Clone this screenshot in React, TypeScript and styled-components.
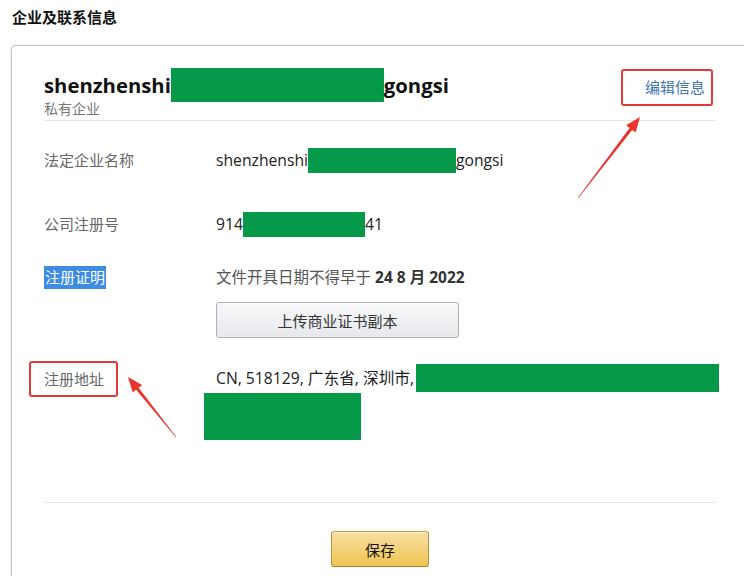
import React from "react";
import styled, { createGlobalStyle } from "styled-components";

const GlobalStyle = createGlobalStyle`
  html, body {
    margin: 0;
    padding: 0;
    background: #ffffff;
    overflow: hidden;
  }
  body {
    font-family: "Open Sans", "Noto Sans CJK SC", sans-serif;
    color: #333;
  }
`;

const Page = styled.div`
  position: relative;
  width: 744px;
  height: 576px;
  padding: 7px 0 0 11px;
  box-sizing: border-box;
  overflow: hidden;
`;

const PageTitle = styled.h1`
  margin: 0 0 0 1px;
  font-size: 15px;
  line-height: 20px;
  font-weight: 700;
  color: #111;
`;

const Card = styled.section`
  margin-top: 18px;
  width: 738px;
  box-sizing: border-box;
  border: 1px solid #c4c4c4;
  border-radius: 4px;
  box-shadow: 0 1px 3px rgba(0, 0, 0, 0.14);
  padding: 22px 32px 40px;
  background: #fff;
`;

const Header = styled.div`
  display: flex;
  justify-content: space-between;
  align-items: flex-start;
  padding-bottom: 4px;
  border-bottom: 1px solid #e6e6e6;
`;

const NameBlock = styled.div`
  display: flex;
  flex-direction: column;
`;

const CompanyName = styled.div`
  display: flex;
  align-items: center;
  height: 34px;
  font-size: 20.3px;
  font-weight: 700;
  color: #111;
`;

const Subtitle = styled.div`
  font-size: 14px;
  line-height: 14px;
  color: #777;
`;

const Redact = styled.span<{ $w: number; $h: number; $ml?: number }>`
  display: inline-block;
  flex: none;
  width: ${(p) => p.$w}px;
  height: ${(p) => p.$h}px;
  margin-left: ${(p) => p.$ml ?? 0}px;
  background: #07994a;
`;

const RedactBlock = styled.div`
  width: 157px;
  height: 47px;
  margin: 1px 0 0 -12px;
  background: #07994a;
`;

const EditLink = styled.a`
  margin: 1px 3px 0 0;
  padding: 0 6px 0 22px;
  border: 2px solid #e23a36;
  border-radius: 3px;
  font-size: 15px;
  line-height: 33px;
  color: #3f74b1;
  text-decoration: none;
  cursor: pointer;
`;

const Row = styled.div<{ $mt: number }>`
  display: grid;
  grid-template-columns: 172px 1fr;
  align-items: start;
  margin-top: ${(p) => p.$mt}px;
  font-size: 15px;
  line-height: 24px;
`;

const Label = styled.div`
  color: #666;
  justify-self: start;
`;

const SelectedLabel = styled.span`
  display: inline-block;
  padding: 0 1px;
  line-height: 23px;
  background: #3d8ce3;
  color: #fff;
`;

const BoxedLabel = styled.div`
  justify-self: start;
  margin-left: -15px;
  padding: 0 12px 0 13px;
  border: 2px solid #e23a36;
  border-radius: 3px;
  line-height: 32px;
  color: #666;
`;

const ValueLine = styled.div<{ $h: number; $mt?: number }>`
  display: flex;
  align-items: center;
  height: ${(p) => p.$h}px;
  margin-top: ${(p) => p.$mt ?? 0}px;
  font-size: 15.7px;
  color: #222;
  white-space: pre;
`;

const Note = styled.div`
  font-size: 15.5px;
  color: #555;
`;

const Strong = styled.b`
  color: #333;
  font-weight: 700;
`;

const UploadButton = styled.button`
  display: block;
  margin-top: 13px;
  width: 243px;
  height: 36px;
  border: 1px solid #adb1b8;
  border-radius: 3px;
  background: linear-gradient(#f7f8fa, #e7e9ec);
  box-shadow: 0 1px 0 rgba(255, 255, 255, 0.6) inset;
  font-family: inherit;
  font-size: 15px;
  color: #333;
  cursor: pointer;
`;

const Divider = styled.hr`
  margin: 62px 0 0;
  border: 0;
  border-top: 1px solid #e6e6e6;
`;

const Actions = styled.div`
  display: flex;
  justify-content: center;
  margin-top: 28px;
`;

const SaveButton = styled.button`
  width: 98px;
  height: 36px;
  border: 1px solid;
  border-color: #c9a23f #b8913a #a8842f;
  border-radius: 3px;
  background: linear-gradient(#f8e0a2, #f0c453);
  box-shadow: 0 1px 0 rgba(255, 255, 255, 0.5) inset;
  font-family: inherit;
  font-size: 15px;
  color: #111;
  cursor: pointer;
`;

const Overlay = styled.svg`
  position: absolute;
  top: 0;
  left: 0;
  pointer-events: none;
`;

function arrowPoints(x1: number, y1: number, x2: number, y2: number): string {
  const dx = x2 - x1;
  const dy = y2 - y1;
  const len = Math.hypot(dx, dy);
  const ux = dx / len;
  const uy = dy / len;
  const nx = -uy;
  const ny = ux;
  const headLen = 15;
  const headW = 6;
  const bx = x2 - ux * headLen;
  const by = y2 - uy * headLen;
  const pts: [number, number][] = [
    [x1 + nx * 0.3, y1 + ny * 0.3],
    [bx + nx * 1.6, by + ny * 1.6],
    [bx + nx * headW, by + ny * headW],
    [x2, y2],
    [bx - nx * headW, by - ny * headW],
    [bx - nx * 1.6, by - ny * 1.6],
    [x1 - nx * 0.3, y1 - ny * 0.3],
  ];
  return pts.map(([x, y]) => `${x.toFixed(1)},${y.toFixed(1)}`).join(" ");
}

export default function App() {
  return (
    <>
      <GlobalStyle />
      <Page>
        <PageTitle>企业及联系信息</PageTitle>
        <Card>
          <Header>
            <NameBlock>
              <CompanyName>
                shenzhenshi
                <Redact $w={213} $h={34} />
                gongsi
              </CompanyName>
              <Subtitle>私有企业</Subtitle>
            </NameBlock>
            <EditLink>编辑信息</EditLink>
          </Header>

          <Row $mt={27}>
            <Label>法定企业名称</Label>
            <ValueLine $h={24}>
              shenzhenshi
              <Redact $w={148} $h={25} />
              gongsi
            </ValueLine>
          </Row>

          <Row $mt={40}>
            <Label>公司注册号</Label>
            <ValueLine $h={24}>
              914
              <Redact $w={122} $h={25} />
              41
            </ValueLine>
          </Row>

          <Row $mt={29}>
            <Label>
              <SelectedLabel>注册证明</SelectedLabel>
            </Label>
            <div>
              <Note>
                文件开具日期不得早于 <Strong>24 8 月 2022</Strong>
              </Note>
              <UploadButton>上传商业证书副本</UploadButton>
            </div>
          </Row>

          <Row $mt={23}>
            <BoxedLabel>注册地址</BoxedLabel>
            <div>
              <ValueLine $h={28} $mt={3}>
                CN, 518129, 广东省, 深圳市,
                <Redact $w={303} $h={28} $ml={2} />
              </ValueLine>
              <RedactBlock />
            </div>
          </Row>

          <Divider />
          <Actions>
            <SaveButton>保存</SaveButton>
          </Actions>
        </Card>

        <Overlay width={744} height={576} viewBox="0 0 744 576">
          <polygon points={arrowPoints(578, 198, 640, 117)} fill="#e8352e" />
          <polygon points={arrowPoints(176, 437, 128, 377)} fill="#e8352e" />
        </Overlay>
      </Page>
    </>
  );
}
